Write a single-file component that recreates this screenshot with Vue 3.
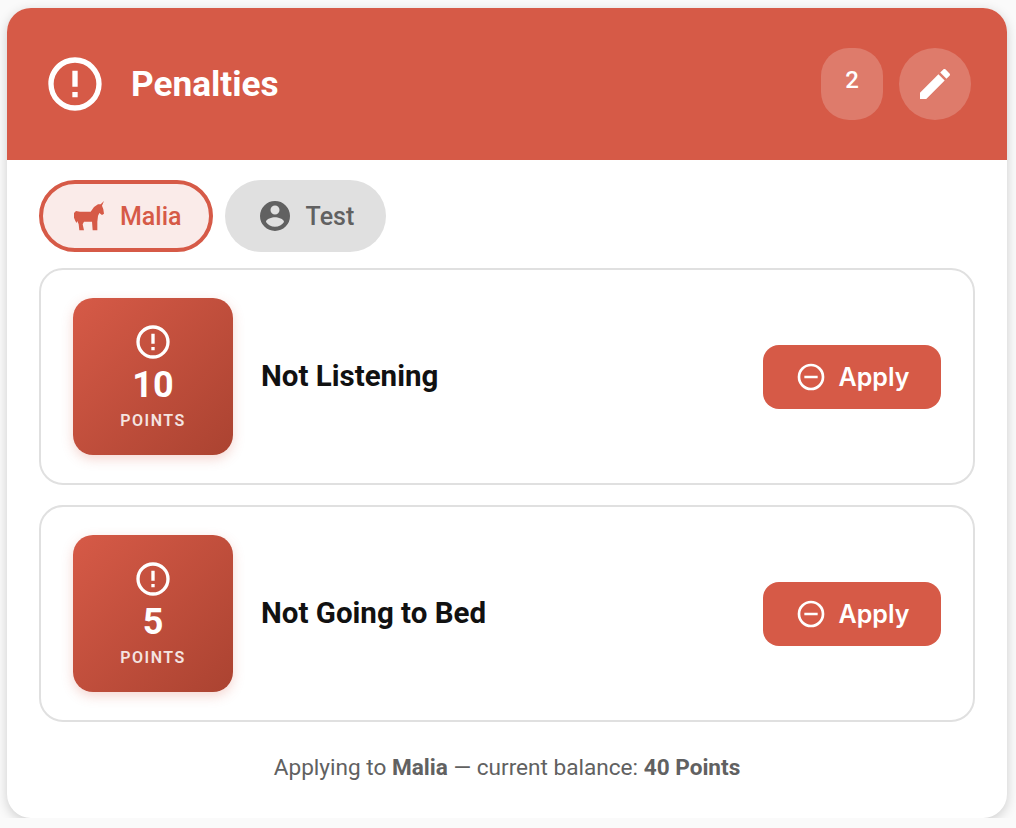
<template>
  <div class="card">
    <header class="head">
      <svg class="head-icon" viewBox="0 0 24 24"><path :d="alertPath" /></svg>
      <h1>Penalties</h1>
      <div class="head-actions">
        <span class="count">2</span>
        <button class="edit">
          <svg viewBox="0 0 24 24"><path d="M3 17.25V21h3.75L17.81 9.94l-3.75-3.75L3 17.25zM20.71 7.04c.39-.39.39-1.02 0-1.41l-2.34-2.34c-.39-.39-1.02-.39-1.41 0l-1.83 1.83 3.75 3.75 1.83-1.83z" /></svg>
        </button>
      </div>
    </header>

    <div class="body">
      <div class="tabs">
        <button class="tab active">
          <svg class="unicorn" viewBox="0 0 90 90"><path d="M90 0 L84 14 L88 25 L90 38 L84 42 L76 36 L72 45 L70 62 L70 88 L56 88 L54 62 L30 62 L26 70 L30 88 L16 88 L14 70 L10 60 L8 66 L4 60 L0 50 L0 36 L6 30 L18 32 L50 32 L60 18 L72 10 L80 10 Z" /></svg>
          <span>Malia</span>
        </button>
        <button class="tab">
          <svg viewBox="0 0 24 24"><path d="M12,19.2C9.5,19.2 7.29,17.92 6,16C6.03,14 10,12.9 12,12.9C14,12.9 17.97,14 18,16C16.71,17.92 14.5,19.2 12,19.2M12,5A3,3 0 0,1 15,8A3,3 0 0,1 12,11A3,3 0 0,1 9,8A3,3 0 0,1 12,5M12,2A10,10 0 0,0 2,12A10,10 0 0,0 12,22A10,10 0 0,0 22,12A10,10 0 0,0 12,2Z" /></svg>
          <span>Test</span>
        </button>
      </div>

      <div class="list">
        <div v-for="item in penalties" :key="item.name" class="row">
          <div class="badge">
            <svg viewBox="0 0 24 24"><path :d="alertPath" /></svg>
            <div class="num">{{ item.points }}</div>
            <div class="unit">POINTS</div>
          </div>
          <div class="name">{{ item.name }}</div>
          <button class="apply">
            <svg viewBox="0 0 24 24"><path d="M12,20C7.59,20 4,16.41 4,12C4,7.59 7.59,4 12,4C16.41,4 20,7.59 20,12C20,16.41 16.41,20 12,20M12,2A10,10 0 0,0 2,12A10,10 0 0,0 12,22A10,10 0 0,0 22,12A10,10 0 0,0 12,2M7,13H17V11H7" /></svg>
            Apply
          </button>
        </div>
      </div>

      <p class="note">Applying to <b>Malia</b> — current balance: <b>40 Points</b></p>
    </div>
  </div>
</template>

<script setup>
const alertPath = 'M11,15H13V17H11V15M11,7H13V13H11V7M12,2C6.47,2 2,6.5 2,12A10,10 0 0,0 12,22A10,10 0 0,0 22,12A10,10 0 0,0 12,2M12,20A8,8 0 0,1 4,12A8,8 0 0,1 12,4A8,8 0 0,1 20,12A8,8 0 0,1 12,20Z';

const penalties = [
  { name: 'Not Listening', points: 10 },
  { name: 'Not Going to Bed', points: 5 }
];
</script>

<style>
html, body {
  background: #fafafa;
}
</style>

<style scoped>
.card {
  width: 1000px;
  height: 810px;
  margin: 8px 0 0 7px;
  background: #fff;
  border-radius: 24px;
  overflow: hidden;
  box-shadow: 0 3px 12px rgba(0, 0, 0, 0.18);
  font-family: Roboto, sans-serif;
}
.head {
  height: 152px;
  box-sizing: border-box;
  padding: 0 36px;
  display: flex;
  align-items: center;
  background: #d65a47;
  color: #fff;
}
.head-icon {
  width: 64px;
  height: 64px;
  fill: #fff;
}
h1 {
  margin: 0 0 0 24px;
  font-size: 35.2px;
  font-weight: 700;
  line-height: 40px;
}
.head-actions {
  margin-left: auto;
  display: flex;
  gap: 16px;
}
.count {
  width: 62px;
  height: 72px;
  box-sizing: border-box;
  padding-top: 16px;
  border-radius: 28px;
  background: rgba(255, 255, 255, 0.2);
  font-size: 24px;
  font-weight: 500;
  line-height: 32px;
  text-align: center;
}
.edit {
  width: 72px;
  height: 72px;
  padding: 0;
  border: 0;
  border-radius: 50%;
  background: rgba(255, 255, 255, 0.2);
  display: flex;
  align-items: center;
  justify-content: center;
}
.edit svg {
  width: 40px;
  height: 40px;
  fill: #fff;
}
.body {
  padding: 20px 32px 0;
}
.tabs {
  display: flex;
  gap: 12px;
}
.tab {
  height: 72px;
  box-sizing: border-box;
  padding: 0 32px;
  border: 0;
  border-radius: 36px;
  background: #e0e0e0;
  color: #616161;
  display: flex;
  align-items: center;
  gap: 13px;
  font-family: inherit;
  font-size: 25px;
  font-weight: 500;
}
.tab svg {
  width: 36px;
  height: 36px;
  fill: currentColor;
}
.tab.active {
  padding: 0 27px 0 31px;
  border: 4px solid #d65a47;
  background: #faebe9;
  color: #d65a47;
  gap: 16px;
}
.tab svg.unicorn {
  width: 30px;
  height: 30px;
}
.list {
  margin-top: 16px;
  display: flex;
  flex-direction: column;
  gap: 20px;
}
.row {
  height: 217px;
  box-sizing: border-box;
  padding: 0 32px;
  border: 2px solid #e0e0e0;
  border-radius: 24px;
  display: flex;
  align-items: center;
}
.badge {
  width: 160px;
  height: 157px;
  box-sizing: border-box;
  padding-top: 2px;
  border-radius: 20px;
  background: linear-gradient(135deg, #d65a47, #ab4331);
  box-shadow: 0 4px 12px rgba(214, 90, 71, 0.25);
  color: #fff;
  display: flex;
  flex-direction: column;
  align-items: center;
  justify-content: center;
}
.badge svg {
  width: 40px;
  height: 40px;
  fill: #fff;
}
.num {
  margin-top: 2px;
  font-size: 36px;
  font-weight: 700;
  line-height: 42px;
}
.unit {
  margin-top: 3px;
  font-size: 16px;
  font-weight: 600;
  letter-spacing: 1.5px;
  line-height: 24px;
  opacity: 0.85;
}
.name {
  margin: 0 0 2px 28px;
  font-size: 29.5px;
  font-weight: 700;
  color: #111;
}
.apply {
  margin-left: auto;
  width: 178px;
  height: 64px;
  padding: 0;
  border: 0;
  border-radius: 16px;
  background: #d65a47;
  color: #fff;
  display: flex;
  align-items: center;
  justify-content: center;
  gap: 12px;
  font-family: Inter, sans-serif;
  font-size: 25px;
  font-weight: 600;
}
.apply svg {
  width: 32px;
  height: 32px;
  fill: #fff;
}
.note {
  margin: 30px 0 0;
  font-size: 22.6px;
  line-height: 32px;
  text-align: center;
  color: #616161;
}
</style>
